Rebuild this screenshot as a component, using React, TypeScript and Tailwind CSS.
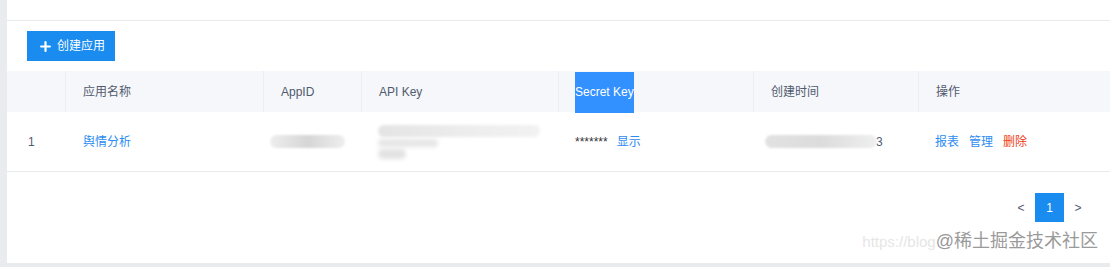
import { Plus } from "lucide-react";

const font = "font-['Liberation_Sans','Noto_Sans_CJK_SC',sans-serif]";

const headers = ["", "应用名称", "AppID", "API Key", "Secret Key", "创建时间", "操作"];

const cols = "grid grid-cols-[58px_198px_98px_197px_195px_165px_1fr]";

export default function App() {
  return (
    <div className={`w-[1110px] h-[267px] bg-[#e9ebee] pl-[7px] ${font}`}>
      <div className="relative h-[263px] bg-white">
        <div className="h-[21px] border-b border-[#e8eaec]" />

        <div className="px-[20px] pt-[10px] pb-[10px]">
          <button className="flex h-[30px] w-[88px] items-center gap-[4px] bg-[#1a8cf0] pl-[11px] text-[12px] text-white">
            <Plus size={15} strokeWidth={3.5} />
            <span>创建应用</span>
          </button>
        </div>

        {/* header */}
        <div className={`${cols} h-[41px] bg-[#f5f7fa] text-[12px] text-[#515a6e]`}>
          {headers.map((h, i) => (
            <div
              key={i}
              className={`flex items-center ${i > 0 ? "border-l border-[#ebeef2] pl-[17px]" : ""}`}
            >
              {h === "Secret Key" ? (
                <span className="-ml-[1px] mt-[1px] flex h-full items-center bg-[#3390ff] text-white">{h}</span>
              ) : (
                h
              )}
            </div>
          ))}
        </div>

        {/* row */}
        <div className={`${cols} h-[60px] border-b border-[#e8eaec] text-[12px] text-[#515a6e]`}>
          <div className="flex items-center pl-[21px]">1</div>
          <div className="flex items-center pl-[18px] text-[#2d8cf0]">舆情分析</div>
          <div className="flex items-center pl-[7px]">
            <div className="h-[13px] w-[75px] rounded-full bg-gradient-to-r from-[#eeeeee] via-[#d6d6d6] to-[#eeeeee] blur-[1px]" />
          </div>
          <div className="flex flex-col justify-center pl-[17px]">
            <div className="h-[12px] w-[162px] rounded-full bg-gradient-to-r from-[#e4e4e4] via-[#ececec] to-[#f2f2f2] blur-[1.5px]" />
            <div className="mt-[2px] h-[8px] w-[60px] rounded-full bg-[#e6e6e6] blur-[2px]" />
            <div className="mt-[2px] h-[10px] w-[28px] rounded-full bg-[#e2e2e2] blur-[2px]" />
          </div>
          <div className="flex items-center pl-[17px]">
            <span className="text-[12px] text-[#333]">*******</span>
            <span className="ml-[9px] text-[#2d8cf0]">显示</span>
          </div>
          <div className="flex items-center pl-[12px]">
            <div className="h-[13px] w-[112px] rounded-full bg-gradient-to-r from-[#e2e2e2] via-[#dcdcdc] to-[#efefef] blur-[1px]" />
            <span className="-ml-[1px]">3</span>
          </div>
          <div className="flex items-center gap-[10px] pl-[17px]">
            <span className="text-[#2d8cf0]">报表</span>
            <span className="text-[#2d8cf0]">管理</span>
            <span className="text-[#ed4014]">删除</span>
          </div>
        </div>

        {/* pagination */}
        <div className="mt-[21px] flex items-center justify-end pr-[20px] text-[12px] text-[#515a6e]">
          <span className="w-[24px] text-center">&lt;</span>
          <span className="mx-[2px] flex h-[29px] w-[29px] items-center justify-center bg-[#1a8cf0] text-white">
            1
          </span>
          <span className="w-[24px] text-center">&gt;</span>
        </div>

        {/* watermark */}
        <div className="absolute right-[12px] top-[228px] leading-[26px]">
          <span className="text-[15px] text-[#e6e6e6]">https://blog</span>
          <span className="text-[18px] text-[#9a9a9a] [text-shadow:0_0_1px_#fff]">@稀土掘金技术社区</span>
        </div>
      </div>
    </div>
  );
}
